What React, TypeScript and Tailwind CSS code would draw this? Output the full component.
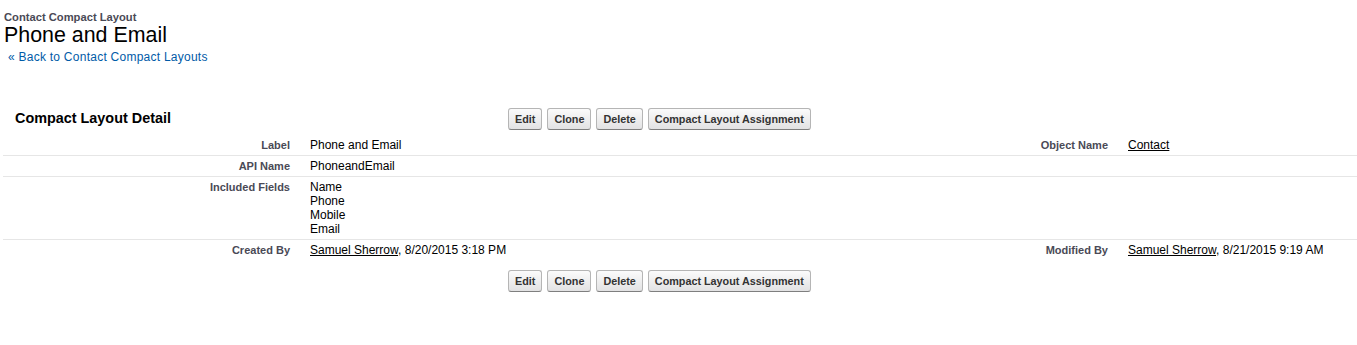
import React from 'react';

const font = "font-['Liberation_Sans',Arial,sans-serif]";

const Btn: React.FC<{ label: string }> = ({ label }) => (
  <button className="h-[22px] px-[6px] text-[10.8px] leading-[13px] font-bold text-[#333] rounded-[3px] border border-[#b5b5b5] border-b-[#7f7f7f] bg-linear-to-b from-[#fbfbfb] to-[#e2e2e3]">
    {label}
  </button>
);

const Buttons: React.FC = () => (
  <div className="flex items-center gap-[5px]">
    <Btn label="Edit" />
    <Btn label="Clone" />
    <Btn label="Delete" />
    <Btn label="Compact Layout Assignment" />
  </div>
);

const LabelCell: React.FC<{ children?: React.ReactNode }> = ({ children }) => (
  <div className="pr-[10px] text-right text-[11px] font-bold text-[#4a4a56]">{children}</div>
);

const DataCell: React.FC<{ children?: React.ReactNode }> = ({ children }) => (
  <div className="pl-[10px] text-[12px] text-black">{children}</div>
);

const Row: React.FC<{ last?: boolean; children: React.ReactNode }> = ({ last, children }) => (
  <div
    className={`grid grid-cols-[297px_700px_118px_1fr] pt-[3px] pb-[3px] leading-[14px] ${
      last ? 'border-b border-transparent' : 'border-b border-[#e6e6e6]'
    }`}
  >
    {children}
  </div>
);

const UserLink: React.FC<{ name: string }> = ({ name }) => <a className="underline text-black cursor-pointer">{name}</a>;

export default function App() {
  return (
    <div className={`${font} bg-white min-h-[345px] w-[1357px] pt-[11px]`}>
      {/* page title */}
      <div className="pl-[4px]">
        <div className="text-[11.2px] leading-[13px] font-bold text-[#4a4a56]">Contact Compact Layout</div>
        <h1 className="text-[21.4px] leading-[23px] text-black">Phone and Email</h1>
        <div className="mt-[3px] pl-[4px] text-[12px] leading-[15px] tracking-[0.25px] text-[#015ba7]">
          « <a className="cursor-pointer">Back to Contact Compact Layouts</a>
        </div>
      </div>

      {/* detail block */}
      <div className="mt-[38px] pl-[3px]">
        <div className="flex items-center h-[32px]">
          <h2 className="w-[505px] pl-[12px] text-[14.4px] font-bold text-black">Compact Layout Detail</h2>
          <Buttons />
        </div>

        <Row>
          <LabelCell>Label</LabelCell>
          <DataCell>Phone and Email</DataCell>
          <LabelCell>Object Name</LabelCell>
          <DataCell>
            <a className="underline cursor-pointer">Contact</a>
          </DataCell>
        </Row>
        <Row>
          <LabelCell>API Name</LabelCell>
          <DataCell>PhoneandEmail</DataCell>
          <LabelCell />
          <DataCell />
        </Row>
        <Row>
          <LabelCell>Included Fields</LabelCell>
          <DataCell>
            <div>Name</div>
            <div>Phone</div>
            <div>Mobile</div>
            <div>Email</div>
          </DataCell>
          <LabelCell />
          <DataCell />
        </Row>
        <Row last>
          <LabelCell>Created By</LabelCell>
          <DataCell>
            <UserLink name="Samuel Sherrow" />, 8/20/2015 3:18 PM
          </DataCell>
          <LabelCell>Modified By</LabelCell>
          <DataCell>
            <UserLink name="Samuel Sherrow" />, 8/21/2015 9:19 AM
          </DataCell>
        </Row>

        <div className="mt-[9px] pl-[505px]">
          <Buttons />
        </div>
      </div>
    </div>
  );
}
